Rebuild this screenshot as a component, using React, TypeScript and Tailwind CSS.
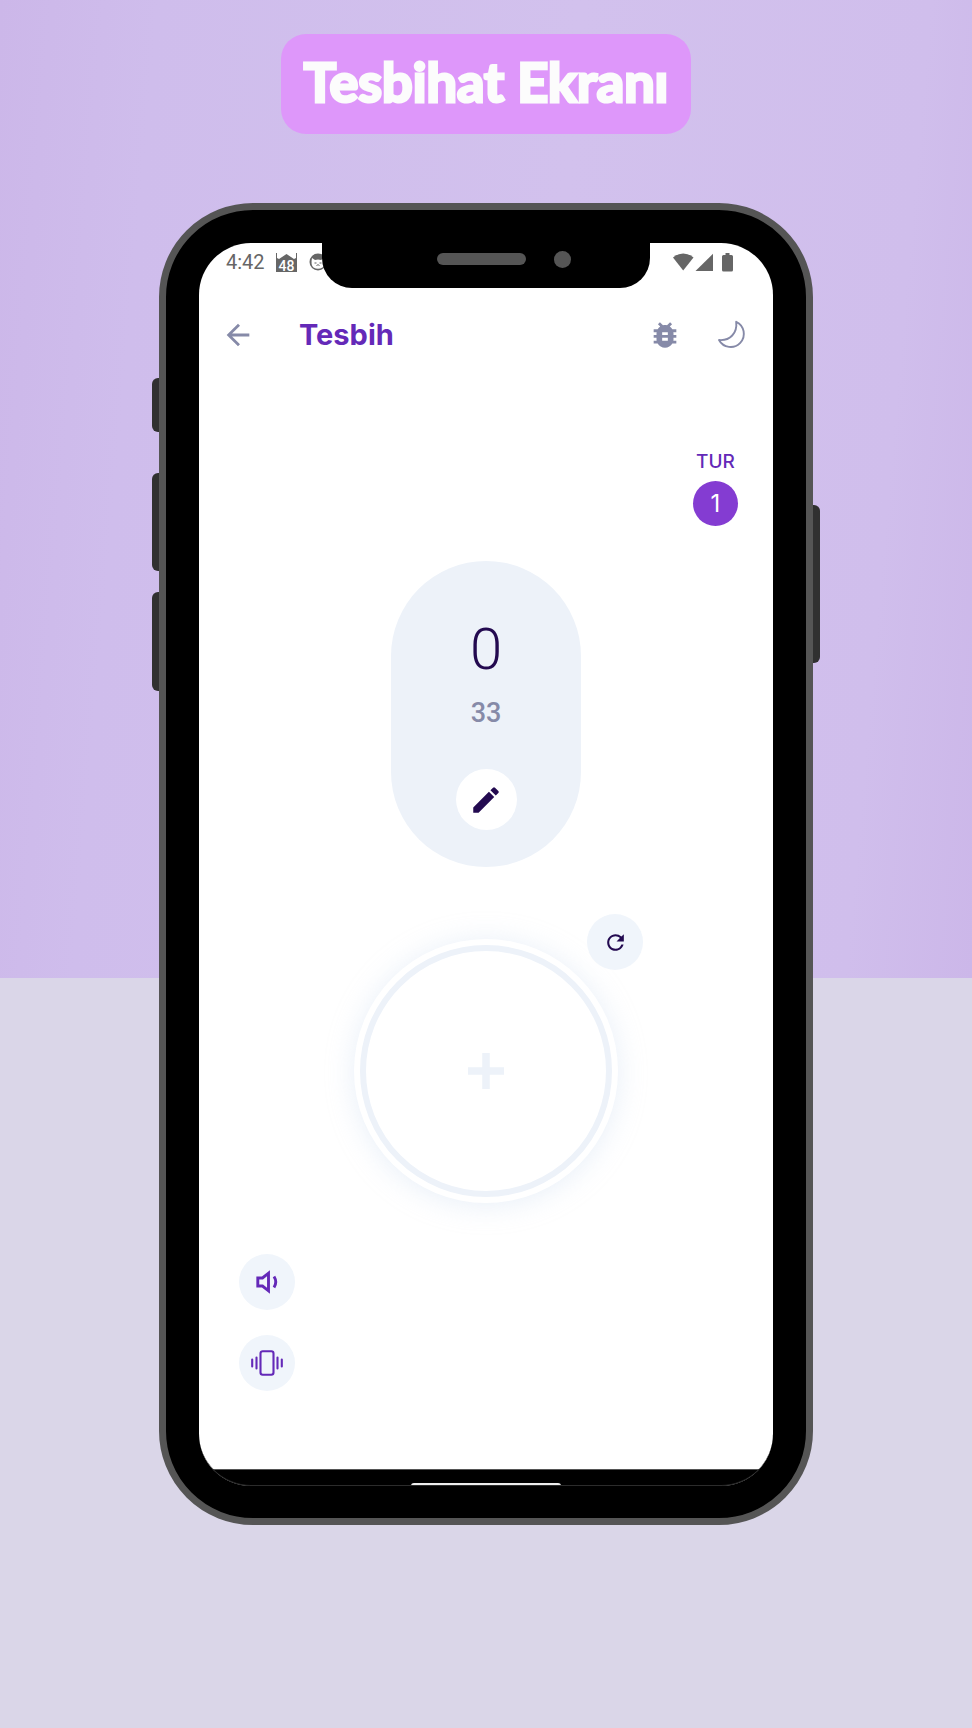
import { MdArrowBack, MdBugReport, MdEdit, MdRefresh } from "react-icons/md";

const roundButton = "flex size-14 items-center justify-center rounded-full bg-[#f0f5fb]";

function MosqueIcon() {
  return (
    <span className="relative block h-5 w-[21px]">
      <svg viewBox="0 0 21 20" className="size-full fill-[#666]" aria-hidden="true">
        <path d="M0 1h1v5l2 1 7.500-5L18 7l2-1V1h1v19H0V6z" />
      </svg>
      <span className="absolute inset-x-0 bottom-0 text-center text-sm leading-3 font-medium text-white">48</span>
    </span>
  );
}

function CatIcon() {
  return (
    <svg viewBox="0 0 18 18" className="size-[18px]" aria-hidden="true">
      <circle cx="9" cy="9" r="8.500" fill="#666" />
      <path d="M3 5l3 2q3-1 6 0l3-2q1.500 7-1.500 9.500Q9 17 4.500 14.500 1.500 12 3 5z" fill="#fff" />
      <path d="M5.500 10h2M10.500 10h2M7.500 12.500l1.500-.8 1.500.8" stroke="#666" fill="none" />
    </svg>
  );
}

function StatusBar() {
  return (
    <div className="flex h-[38px] items-center justify-between pr-[39px] pl-[27px] text-[#666]">
      <div className="flex items-center">
        <span className="w-[50px] text-xl leading-5">4:42</span>
        <MosqueIcon />
        <span className="ml-3">
          <CatIcon />
        </span>
      </div>
      <svg viewBox="0 0 61 19" className="h-[19px] w-[61px] fill-current" aria-hidden="true">
        <path d="M0 4.500Q4.500.5 10.200.5T20.500 4.500L10.200 17.500z" />
        <path d="M40 .8V18H22.500z" />
        <path d="M52.500 0h4v2h2q1.500 0 1.500 1.500V17q0 1.500-1.500 1.500h-8Q49 18.500 49 17V3.500Q49 2 50.500 2h2z" />
      </svg>
    </div>
  );
}

function AppBar() {
  return (
    <header className="flex h-[108px] items-center pr-[26px] pl-[22px] text-[#868aa8]">
      <button aria-label="Geri">
        <MdArrowBack className="size-[34px]" />
      </button>
      <h2 className="ml-11 flex-1 text-[29px] leading-9 font-bold text-[#6429b8] [font-family:Inter,sans-serif]">Tesbih</h2>
      <button aria-label="Hata bildir" className="mr-[35px]">
        <MdBugReport className="size-[34px]" />
      </button>
      <button aria-label="Karanlık mod">
        <svg viewBox="0 0 30 30" className="size-[30px]" fill="none" stroke="currentColor" strokeWidth="1.900" strokeLinejoin="round" aria-hidden="true">
          <path d="M19.200 1.800A13.200 13.200 0 1 1 2 20C13 21 20.500 13 19.200 1.800z" />
        </svg>
      </button>
    </header>
  );
}

function SpeakerIcon() {
  return (
    <svg viewBox="0 0 22 24" className="h-6 w-[22px]" fill="none" stroke="#6429b8" strokeWidth="2.900" aria-hidden="true">
      <path d="M1.800 8h4.700l6-4.800v17.600L6.500 16H1.800z" />
      <path d="M18 6.500q3.500 5.500 0 11" />
    </svg>
  );
}

function VibrateIcon() {
  return (
    <svg viewBox="0 0 32 26" className="h-[26px] w-8" fill="none" stroke="#6429b8" strokeWidth="2.100" strokeLinecap="round" aria-hidden="true">
      <rect x="9.500" y="1.200" width="13" height="23.600" rx="2.200" />
      <path d="M1.200 9.500v7M5.500 7.500v11M26.500 7.500v11M30.800 9.500v7" />
    </svg>
  );
}

function Screen() {
  return (
    <div className="relative overflow-hidden rounded-[52px] bg-white">
      <StatusBar />
      <AppBar />
      <main className="flex flex-col items-center">
        <div className="mt-[61px] mr-[35px] flex flex-col items-center self-end text-[#6429b8] [font-family:Inter,sans-serif]">
          <span className="text-[19px] leading-6 font-medium">TUR</span>
          <span className="mt-[7px] flex size-[45px] items-center justify-center rounded-full bg-[#843cd2] text-2xl text-white">1</span>
        </div>
        <section className="mt-[35px] flex h-[306px] w-[190px] flex-col items-center rounded-full bg-[#edf2f9]">
          <output className="mt-14 text-[58px] leading-[64px] font-light text-[#230a50]">0</output>
          <span className="mt-4 text-[27px] leading-8 font-medium text-[#868aa8]">33</span>
          <button aria-label="Hedefi düzenle" className="mt-10 flex size-[61px] items-center justify-center rounded-full bg-white">
            <MdEdit className="size-[34px] text-[#230a50]" />
          </button>
        </section>
        <div className="relative mt-[72px]">
          <button
            aria-label="Artır"
            className="flex size-[264px] items-center justify-center rounded-full bg-white p-1.5 shadow-[0_2px_28px_rgba(190,210,235,0.350)]"
          >
            <span className="flex size-full items-center justify-center rounded-full border-[6px] border-[#edf2f9]">
              <svg viewBox="0 0 36 36" className="size-9" stroke="#edf2f9" strokeWidth="7.500" aria-hidden="true">
                <path d="M18 0v36M0 18h36" />
              </svg>
            </span>
          </button>
          <button aria-label="Sıfırla" className={`${roundButton} absolute -top-[25px] -right-[25px]`}>
            <MdRefresh className="size-[25px] text-[#230a50]" />
          </button>
        </div>
        <div className="mt-[51px] mb-[78px] ml-10 flex flex-col gap-[25px] self-start">
          <button aria-label="Ses" className={roundButton}>
            <SpeakerIcon />
          </button>
          <button aria-label="Titreşim" className={roundButton}>
            <VibrateIcon />
          </button>
        </div>
      </main>
      <div className="flex h-[17px] items-end justify-center border-t border-[#555] bg-black">
        <span className="h-[3px] w-[150px] rounded-t-sm bg-[#eee]" />
      </div>
      <div className="absolute inset-x-0 bottom-0 h-14 rounded-b-[52px] border-b border-[#2c2c2c]" />
      <div className="absolute top-0 left-1/2 h-[45px] w-[328px] -translate-x-1/2 rounded-b-[30px] bg-black">
        <span className="absolute top-[10px] left-[115px] h-3 w-[89px] rounded-full bg-[#555]" />
        <span className="absolute top-2 left-[232px] size-[17px] rounded-full bg-[#555]" />
      </div>
    </div>
  );
}

const sideKey = "absolute w-[7px] bg-[#303030]";

export default function App() {
  return (
    <div className="flex min-h-screen flex-col items-center bg-[#dad6e8] bg-[linear-gradient(95deg,#ccb7e9,#cfbdec_15%,#d2c1ed_55%,#d0beec_88%,#ccb7e9)] bg-[length:100%_978px] bg-no-repeat pb-[203px] [font-family:Roboto,sans-serif]">
      <h1 className="mt-[34px] flex h-[100px] w-[410px] items-center justify-center rounded-[25px] bg-[#de97fa] pb-1 text-[54px] leading-none font-bold whitespace-nowrap text-[#fcfcfc] [-webkit-text-stroke:3px_#fcfcfc] [font-family:Lato,sans-serif] [stroke-linejoin:round]">
        Tesbihat Ekranı
      </h1>
      <div className="relative mt-[69px] w-[654px]">
        <span className={`${sideKey} top-[175px] -left-[7px] h-[54px] rounded-l-md`} />
        <span className={`${sideKey} top-[270px] -left-[7px] h-[98px] rounded-l-md`} />
        <span className={`${sideKey} top-[389px] -left-[7px] h-[99px] rounded-l-md`} />
        <span className={`${sideKey} top-[302px] -right-[7px] h-[158px] rounded-r-md`} />
        <div className="rounded-[94px] border-[7px] border-[#555] bg-black px-[33px] pt-[33px] pb-8">
          <Screen />
        </div>
      </div>
    </div>
  );
}
